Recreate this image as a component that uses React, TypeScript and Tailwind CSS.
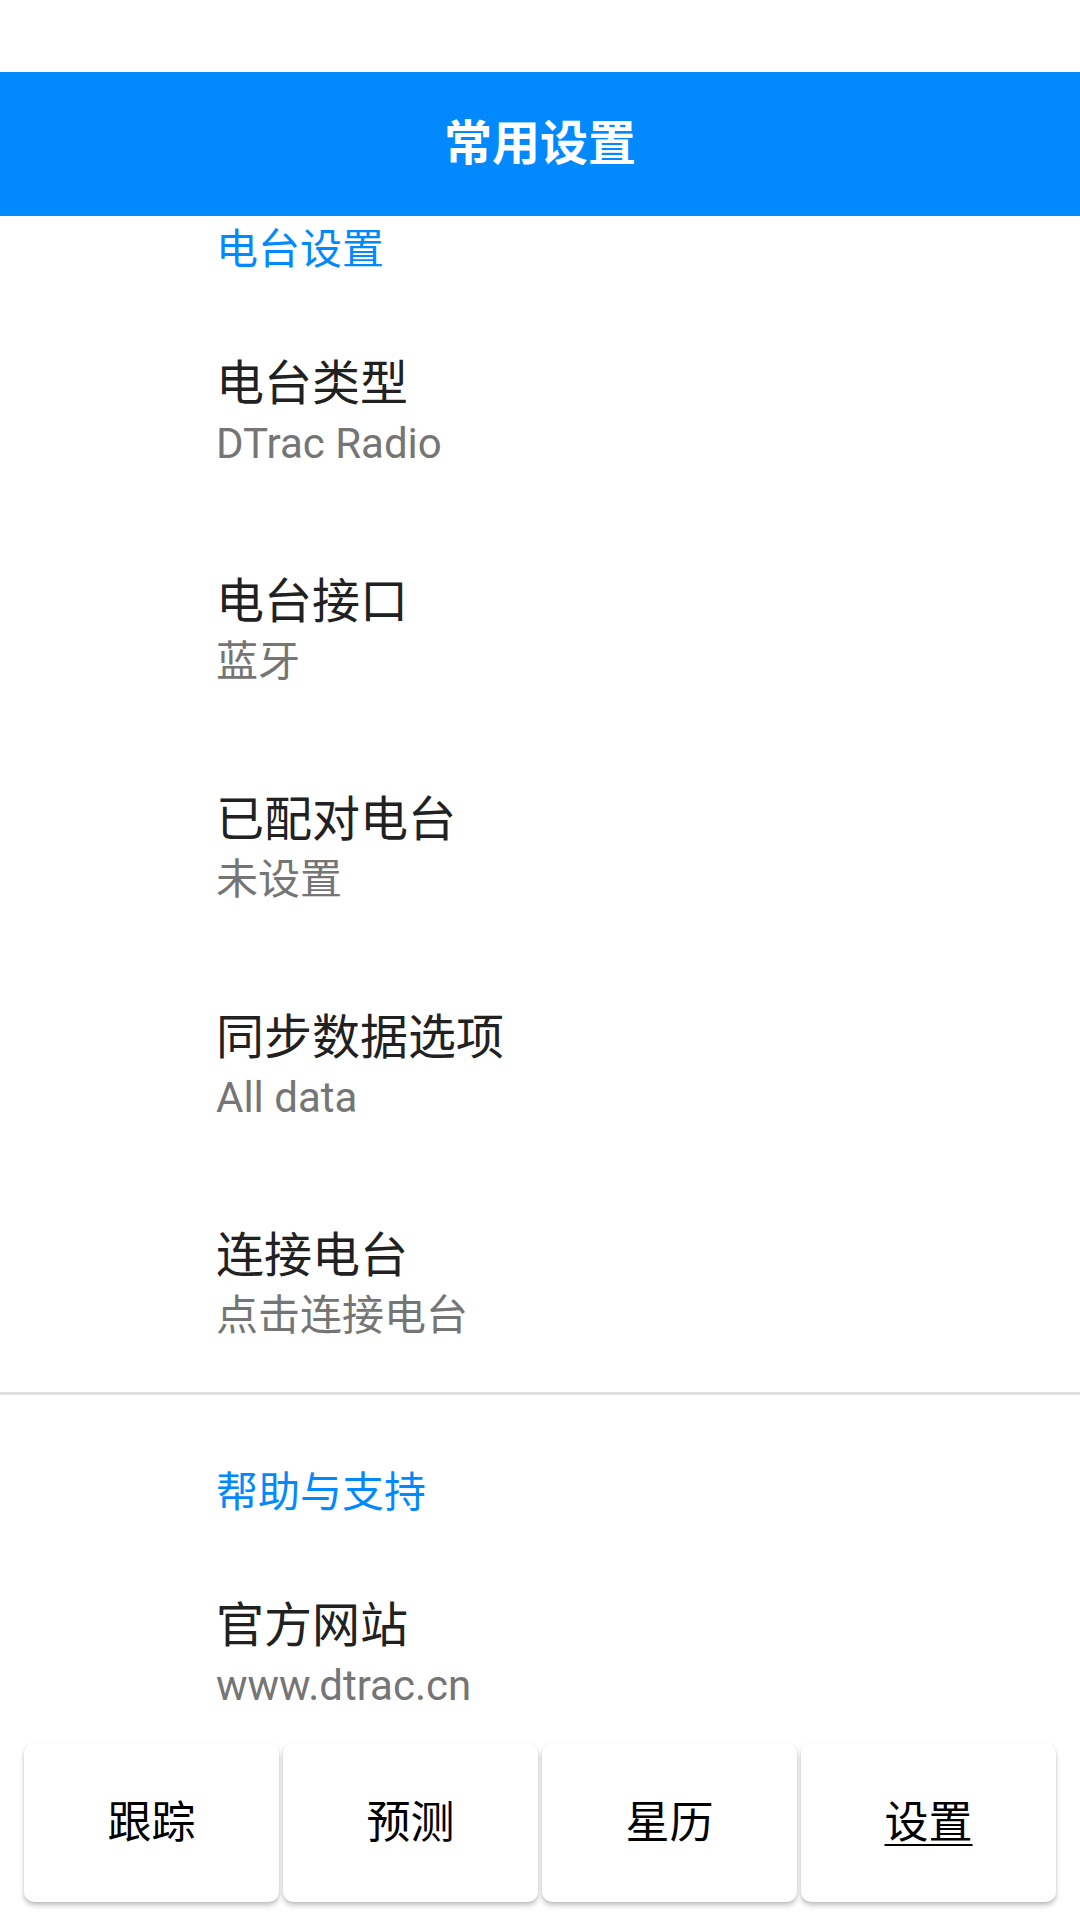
const items1 = [
  { title: "电台类型", summary: "DTrac Radio" },
  { title: "电台接口", summary: "蓝牙" },
  { title: "已配对电台", summary: "未设置" },
  { title: "同步数据选项", summary: "All data" },
  { title: "连接电台", summary: "点击连接电台" },
];

const tabs = ["跟踪", "预测", "星历", "设置"];

function PrefRow({ title, summary }: { title: string; summary: string }) {
  return (
    <div className="h-[218px] shrink-0 pl-[216px] pt-[79px]">
      <div className="text-[48px] leading-[60px] text-[#212121]">{title}</div>
      <div className="text-[42px] leading-[60px] text-[#757575]">{summary}</div>
    </div>
  );
}

export default function App() {
  return (
    <div
      className="flex h-[1920px] w-[1080px] flex-col overflow-hidden bg-white"
      style={{ fontFamily: 'Roboto, "Noto Sans CJK SC", sans-serif' }}
    >
      <div className="h-[72px] shrink-0 bg-white" />
      <header className="flex h-[144px] shrink-0 items-center justify-center bg-[#0389fe]">
        <h1 className="text-[48px] font-bold leading-none text-white">常用设置</h1>
      </header>

      <main className="flex flex-1 flex-col overflow-hidden">
        <div className="h-[59px] shrink-0 pl-[216px] pt-[9px]">
          <div className="text-[42px] leading-[50px] text-[#0389fe]">电台设置</div>
        </div>
        {items1.map((it) => (
          <PrefRow key={it.title} title={it.title} summary={it.summary} />
        ))}
        <div className="mt-[27px] h-[3px] shrink-0 bg-[#e0e0e0]" />
        <div className="h-[122px] shrink-0 pl-[216px] pt-[73px]">
          <div className="text-[42px] leading-[49px] text-[#0389fe]">帮助与支持</div>
        </div>
        <PrefRow title="官方网站" summary="www.dtrac.cn" />
      </main>

      <nav className="flex h-[200px] shrink-0 gap-[4px] px-[24px] pt-[23px]">
        {tabs.map((t, i) => (
          <button
            key={t}
            className="flex h-[159px] flex-1 items-center justify-center rounded-[10px] bg-white shadow-[0_4px_5px_rgba(0,0,0,0.18),0_1px_3px_rgba(0,0,0,0.12)]"
          >
            <span
              className={
                "text-[44px] leading-none text-black" +
                (i === 3 ? " underline decoration-2 underline-offset-[6px]" : "")
              }
            >
              {t}
            </span>
          </button>
        ))}
      </nav>
    </div>
  );
}
